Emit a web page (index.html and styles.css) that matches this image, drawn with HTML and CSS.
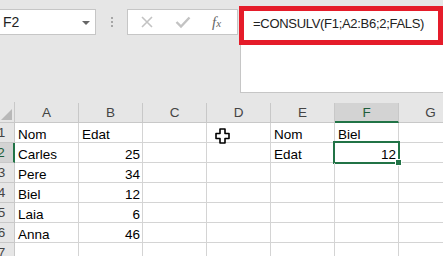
FILE: index.html
```html
<!DOCTYPE html>
<html lang="ca">
<head>
<meta charset="UTF-8">
<title>CONSULV</title>
<link rel="stylesheet" href="styles.css">
</head>
<body>
<div class="toolbar">
  <div class="namebox">
    <span>F2</span>
    <span class="caret"></span>
  </div>
  <div class="grip"><i></i><i></i><i></i></div>
  <div class="fnbox">
    <svg class="ic" width="14" height="14" viewBox="0 0 14 14"><path d="M2 2 L12 12 M12 2 L2 12" stroke="#c3c3c3" stroke-width="1.6" fill="none"/></svg>
    <svg class="ic" width="16" height="14" viewBox="0 0 16 14"><path d="M1.5 7 L6 11.5 L14.5 2.5" stroke="#c3c3c3" stroke-width="2.4" fill="none"/></svg>
    <span class="fx">f<small>x</small></span>
  </div>
  <div class="formula">=CONSULV(F1;A2:B6;2;FALS)</div>
  <!-- marc vermell que destaca la fórmula -->
  <div class="highlight"></div>
</div>

<div class="sheet">
  <div class="hd corner"><span class="tri"></span></div>
  <div class="hd">A</div>
  <div class="hd">B</div>
  <div class="hd">C</div>
  <div class="hd">D</div>
  <div class="hd">E</div>
  <div class="hd sel-col">F</div>
  <div class="hd">G</div>

  <div class="rh">1</div>
  <div class="c">Nom</div>
  <div class="c">Edat</div>
  <div class="c"></div>
  <div class="c cur">
    <svg width="15" height="16" viewBox="0 0 15 16"><path d="M5 1 H10 V5.5 H14 V10.5 H10 V15 H5 V10.5 H1 V5.5 H5 Z" fill="#fff" stroke="#000" stroke-width="1.6" stroke-linejoin="round"/></svg>
  </div>
  <div class="c">Nom</div>
  <div class="c">Biel</div>
  <div class="c"></div>

  <div class="rh sel-row">2</div>
  <div class="c">Carles</div>
  <div class="c n">25</div>
  <div class="c"></div>
  <div class="c"></div>
  <div class="c">Edat</div>
  <div class="c n active">12</div>
  <div class="c"></div>

  <div class="rh">3</div>
  <div class="c">Pere</div>
  <div class="c n">34</div>
  <div class="c"></div><div class="c"></div><div class="c"></div><div class="c"></div><div class="c"></div>

  <div class="rh">4</div>
  <div class="c">Biel</div>
  <div class="c n">12</div>
  <div class="c"></div><div class="c"></div><div class="c"></div><div class="c"></div><div class="c"></div>

  <div class="rh">5</div>
  <div class="c">Laia</div>
  <div class="c n">6</div>
  <div class="c"></div><div class="c"></div><div class="c"></div><div class="c"></div><div class="c"></div>

  <div class="rh">6</div>
  <div class="c">Anna</div>
  <div class="c n">46</div>
  <div class="c"></div><div class="c"></div><div class="c"></div><div class="c"></div><div class="c"></div>

  <div class="rh">7</div>
  <div class="c"></div><div class="c"></div><div class="c"></div><div class="c"></div><div class="c"></div><div class="c"></div><div class="c"></div>
</div>
</body>
</html>
```

FILE: styles.css
```css
/* pàgina sencera */
body {
  margin: 0;
  width: 443px;
  height: 256px;
  overflow: hidden;
  background: #fff;
  font-family: "Liberation Sans", Arial, sans-serif;
  font-size: 13.5px;
  color: #000;
}

/* barra de fórmules */
.toolbar {
  position: relative;
  display: flex;
  align-items: flex-start;
  height: 103px;
  padding-top: 9px;
  box-sizing: border-box;
  background: #e6e6e6;
}
.namebox {
  display: flex;
  align-items: center;
  justify-content: space-between;
  margin-left: -3px;
  width: 99px;
  height: 26px;
  padding: 0 5px 0 5px;
  box-sizing: border-box;
  background: #fff;
  border: 1px solid #c6c6c6;
  font-size: 14px;
  color: #222;
}
.caret {
  width: 0;
  height: 0;
  border-left: 4px solid transparent;
  border-right: 4px solid transparent;
  border-top: 4px solid #666;
  margin-top: 1px;
}
.grip {
  width: 31px;
  height: 26px;
  display: flex;
  flex-direction: column;
  align-items: center;
  justify-content: center;
  gap: 2px;
}
.grip i {
  width: 2px;
  height: 2px;
  background: #a6a6a6;
}
.fnbox {
  display: flex;
  align-items: center;
  width: 111px;
  height: 26px;
  box-sizing: border-box;
  padding-left: 12px;
  background: #fff;
  border: 1px solid #c6c6c6;
}
.fnbox .ic:first-child { margin-right: 21px; }
.fnbox .ic + .ic { margin-right: 21px; }
.fx {
  font-family: "Liberation Serif", serif;
  font-style: italic;
  font-size: 15px;
  color: #666;
}
.fx small { font-size: 11px; }
.formula {
  flex: 1;
  margin-left: 2px;
  height: 84px;
  box-sizing: border-box;
  padding-left: 12px;
  line-height: 28px;
  background: #fff;
  border: 1px solid #c6c6c6;
  border-right: none;
  font-size: 13px;
  letter-spacing: -0.3px;
  color: #222;
}
.highlight {
  position: absolute;
  left: 239px;
  top: 6px;
  right: 0;
  height: 39px;
  box-sizing: border-box;
  border: 5px solid #e51c2a;
}

/* full de càlcul */
.sheet {
  display: grid;
  grid-template-columns: 26px repeat(7, 64px);
  grid-auto-rows: 20px;
  margin-left: -11px;
}
.hd {
  height: 21px;
  box-sizing: border-box;
  background: #e6e6e6;
  border-right: 1px solid #c8c8c8;
  border-bottom: 1px solid #c8c8c8;
  text-align: center;
  line-height: 21px;
  color: #444;
  margin-top: -1px;
}
.corner { position: relative; }
.tri {
  position: absolute;
  right: 2px;
  bottom: 2px;
  width: 0;
  height: 0;
  border-left: 11px solid transparent;
  border-bottom: 11px solid #b8b8b8;
}
.sel-col {
  background: #d3d3d3;
  border-bottom: 2px solid #217346;
  color: #1e5e3a;
}
.rh {
  box-sizing: border-box;
  background: #e6e6e6;
  border-right: 1px solid #c8c8c8;
  border-bottom: 1px solid #c8c8c8;
  text-align: center;
  line-height: 20px;
  color: #444;
}
.sel-row {
  background: #d3d3d3;
  border-right: 2px solid #217346;
  color: #1e5e3a;
}
.c {
  position: relative;
  box-sizing: border-box;
  border-right: 1px solid #d4d4d4;
  border-bottom: 1px solid #d4d4d4;
  padding: 2px 3px 0;
  line-height: 19px;
  white-space: nowrap;
}
.n {
  text-align: right;
  padding-right: 2px;
}
.active::after {
  content: "";
  position: absolute;
  left: -2px;
  top: -2px;
  right: -2px;
  bottom: -2px;
  border: 2px solid #217346;
}
.active::before {
  content: "";
  position: absolute;
  right: -4px;
  bottom: -4px;
  width: 5px;
  height: 5px;
  background: #217346;
  border: 1px solid #fff;
  z-index: 1;
}
.cur svg {
  position: absolute;
  left: 8px;
  top: 5px;
}
```
